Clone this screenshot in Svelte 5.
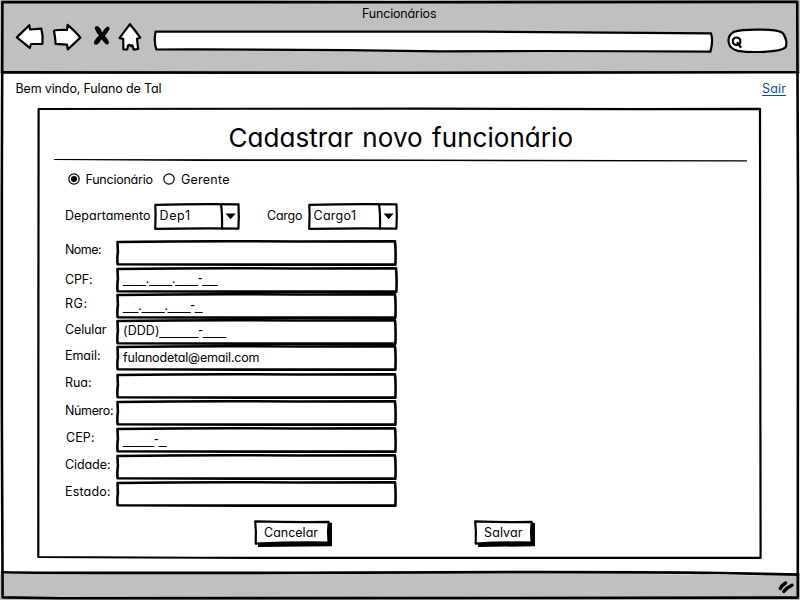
<script>
  const fields = [
    { label: 'Nome:', lw: 36.5, gap: 0, lt: 1 },
    { label: 'CPF:', lw: 27.5, gap: 1, lt: 4, mask: '___.___.___-__', mw: 94.5, vt: 3, wide: true },
    { label: 'RG:', lw: 22, gap: 0, lt: 2, mask: '__.___.___-_', mw: 79.5, vt: 4 },
    { label: 'Celular', lw: 41.5, gap: 0, lt: 2, value: '(DDD)', vw: 36.5, mask: '_____-___', mw: 66.5, vt: 3 },
    { label: 'Email:', lw: 35.5, gap: 0, lt: 2, value: 'fulanodetal@email.com', vw: 136.5, vt: 4 },
    { label: 'Rua:', lw: 26.5, gap: 2, lt: 1 },
    { label: 'Número:', lw: 48.5, gap: 1, lt: 2 },
    { label: 'CEP:', lw: 28.5, gap: 1, lt: 2, mask: '____-_', mw: 43.5, vt: 4, indent: 1 },
    { label: 'Cidade:', lw: 45.5, gap: 1, lt: 2 },
    { label: 'Estado:', lw: 45.5, gap: 1, lt: 2 }
  ];

  // Spreads the letters of a run so that it fills the given width.
  function fit(node, width) {
    const natural = node.getBoundingClientRect().width;
    const spacing = (width - natural) / (node.textContent.length - 1);
    node.style.letterSpacing = `${spacing}px`;
    node.style.marginRight = `${-spacing}px`;
  }
</script>

{#snippet text(value, width)}
  <span class="run" use:fit={width}>{value}</span>
{/snippet}

{#snippet select(value, width, textWidth)}
  <div class="select" style:width="{width}px">
    <svg class="sketch" {width} height="27" viewBox="0 0 {width} 27">
      <path class="paper" d="M1.3 1.8 Q{width / 2} .9 {width - 1.5} 1.4 L{width - 1.2} 14 L{width - 1.6} 25.6 Q{width / 2} 25.2 1.2 25.9 L1.6 12Z" />
      <path class="line" d="M{width - 19} 1.5 Q{width - 17.6} 10 {width - 18} 25.5" />
      <path d="M{width - 14.4} 10.6 H{width - 4.4} L{width - 9.4} 16.2Z" />
    </svg>
    {@render text(value, textWidth)}
  </div>
{/snippet}

{#snippet button(value, width, textWidth)}
  <button style:width="{width}px">
    <svg class="sketch" {width} height="27" viewBox="0 0 {width} 27">
      <path d="M4 24 L4 27 L{width} 26.3 V3 L{width - 3} 2.4Z" />
      <path class="paper" d="M1.2 1.3 Q{width / 2} 2.4 {width - 3.3} 1.9 L{width - 4} 12 L{width - 3.4} 22.6 Q{width / 2} 22 1.7 23.6 L1.9 12Z" />
    </svg>
    {@render text(value, textWidth)}
  </button>
{/snippet}

<div class="window">
  <header>
    <div class="title">{@render text('Funcionários', 74.5)}</div>
    <div class="toolbar">
      <svg class="back" width="31" height="32" viewBox="14 22 31 32">
        <path class="paper" d="M16.8 37.4 L29.3 25.2 L30 29.5 L41.3 28.6 L42.6 36 L42.4 43.8 L31 44 L29.8 48 Q22 41.5 16.8 37.4Z" />
      </svg>
      <svg class="forward" width="32" height="32" viewBox="51 22 32 32">
        <path class="paper" d="M54 31 Q54.3 29.6 67 30 L67.6 24.8 Q76 32 80.4 37.6 L67.8 49.4 L67 44.6 L55.6 43.9 L55 37Z" />
      </svg>
      <svg class="stop" width="20" height="32" viewBox="92 22 20 32">
        <path d="M94.6 28 Q95.5 25.4 98.4 26.4 Q101 28.5 102.3 32.4 Q104.5 28.4 107.3 26.6 Q110 26.6 109.4 29.6 Q107.4 33 104.9 35.7 Q107.8 38.8 109 42 Q109 45 106.2 44.4 Q103.6 42.4 101.6 39.2 Q99.6 43 96.8 44.8 Q93.4 45.2 94 41.6 Q95.8 38.4 98.9 35.6 Q95.8 32 94.6 28Z" />
      </svg>
      <svg class="home" width="26" height="32" viewBox="117 22 26 32">
        <path class="paper" d="M130 24.2 L134.6 30 L140.3 37.6 L137 38.8 L138.2 49 L133.7 49.6 L132.4 45.3 L131 46.2 L129.6 44.9 L128 45.5 L127.3 49.4 L123.4 49.5 L123.2 38.8 L119.6 38.2 Q123.4 32.8 130 24.2Z" />
      </svg>
      <svg class="address" width="563" height="32" viewBox="152 22 563 32">
        <path class="paper" d="M155.6 31.5 L480 31.7 Q600 32.6 711 33.3 Q713.4 40 710.5 51.6 Q560 50.6 440 51.3 Q300 49.2 156.4 49.5 Q153.6 42 155.6 31.5Z" />
      </svg>
      <svg class="search" width="65" height="32" viewBox="725 22 65 32">
        <path class="paper" d="M734 31.8 C744 28.4 776 29.2 781.5 32.2 C785.5 34.8 787.5 43 785.6 47.3 C780.5 52.6 750 52.8 738 50.8 C726.5 48.5 725.8 36.5 734 31.8Z" />
        <circle class="line" cx="736.6" cy="41.3" r="3.8" />
        <path class="line" d="M737.6 43 L740.6 47" />
      </svg>
    </div>
  </header>

  <main>
    <div class="session">
      {@render text('Bem vindo, Fulano de Tal', 146)}
      <a href="#sair">{@render text('Sair', 24)}</a>
    </div>

    <section class="panel">
      <svg class="sketch" width="725" height="452" viewBox="37 107 725 452">
        <path class="line" d="M38.6 109 Q200 108 420 108.6 Q560 109.4 640 109.2 L760 108.8 L760.2 300 L760.6 557.8 Q600 558.4 400 557.8 Q200 558.2 38.3 557 L38.4 300Z" />
      </svg>
      <h1>{@render text('Cadastrar novo funcionário', 344.5)}</h1>
      <svg class="rule" width="693" height="6" viewBox="54 157 693 6">
        <path d="M54 159 L300 159.3 L747 160.2 L747 161.5 L420 161.1 L200 161.1 L54 160Z" />
      </svg>

      <div class="roles">
        <label>
          <svg width="12" height="12" viewBox="0 0 12 12">
            <circle class="ring" cx="6" cy="6" r="5.2" />
            <circle cx="6" cy="6" r="3" />
          </svg>
          {@render text('Funcionário', 67.5)}
        </label>
        <label>
          <svg width="12" height="12" viewBox="0 0 12 12">
            <circle class="ring" cx="6" cy="6" r="5.2" />
          </svg>
          {@render text('Gerente', 48.5)}
        </label>
      </div>

      <div class="selects">
        <div class="name dep">{@render text('Departamento', 85.5)}</div>
        {@render select('Dep1', 86, 30.5)}
        <div class="name cargo">{@render text('Cargo', 35.5)}</div>
        {@render select('Cargo1', 90, 42.5)}
      </div>

      <div class="fields">
        {#each fields as f}
          {@const w = f.wide ? 282 : 281}
          <div class="field" style:margin-top="{f.gap}px">
            <div class="label" style:padding-top="{f.lt}px" style:padding-left="{f.indent ?? 0}px">
              {@render text(f.label, f.lw)}
            </div>
            <div class="input" style:width="{w}px" style:padding-top="{f.vt ?? 0}px">
              <svg class="sketch" width={w} height="26" viewBox="0 0 {w} 26">
                <path class="paper thick" d="M1.5 2 Q90 .9 180 1.5 L{w - 2} 1.4 Q{w - 1} 10 {w - 1.6} 24.6 Q190 24.7 130 24.6 Q60 24.2 1.6 24.2 Q1 18 1.9 12Z" />
              </svg>
              {#if f.value}{@render text(f.value, f.vw)}{/if}
              {#if f.mask}<span class="mask">{@render text(f.mask, f.mw)}</span>{/if}
            </div>
          </div>
        {/each}
      </div>

      <div class="actions">
        {@render button('Cancelar', 78, 54)}
        {@render button('Salvar', 61, 38.5)}
      </div>
    </section>
  </main>

  <footer>
    <svg width="20" height="16" viewBox="776 579 20 16">
      <path class="grip" d="M785.6 583 Q781.5 585.6 780.2 588.6 M792 585.2 Q787 587.4 783.8 591.4" />
    </svg>
  </footer>

  <svg class="sketch" width="800" height="600" viewBox="0 0 800 600">
    <path d="M0 571 L300 572 L640 570.8 L798 573.5 L798 576 L640 574 L300 574 L0 574Z" fill="#fff" />
    <path class="line thick" d="M2.4 2 L400 2.2 L797.2 1.8 L798 200 L797.8 597.6 L500 598 Q200 598.2 60 598.2 L2.6 597.4 L1.8 400 L1.8 200Z" />
    <path class="line thick" d="M2 72.4 L400 72.8 L798 72.2" />
    <path class="line thick" d="M2 572.2 Q60 573.2 300 572.8 Q600 571.4 720 573 L798 574.6" />
  </svg>
</div>

<style>
  :global(body) {
    margin: 0;
    background: #fff;
  }
  .window {
    position: relative;
    display: flex;
    flex-direction: column;
    width: 800px;
    height: 600px;
    overflow: hidden;
    background: #fff;
    color: #000;
    font: 12.5px/18px Inter, 'Open Sans', sans-serif;
    font-feature-settings: 'cv11', 'calt' 0;
  }
  svg {
    display: block;
    flex: none;
  }
  .run {
    display: inline-block;
    white-space: pre;
    z-index: 1;
  }
  .sketch {
    position: absolute;
    left: 0;
    top: 0;
    pointer-events: none;
  }
  .line,
  .paper {
    fill: none;
    stroke: #000;
    stroke-width: 2.2;
    stroke-linejoin: round;
    stroke-linecap: round;
  }
  .paper {
    fill: #fff;
  }
  .thick {
    stroke-width: 2.6;
  }
  header {
    height: 73px;
    background: #c0c0c0;
  }
  .title {
    padding: 5px 0 1px 362px;
    height: 16px;
  }
  .toolbar {
    display: flex;
    padding-left: 14px;
  }
  .forward {
    margin-left: 6px;
  }
  .stop {
    margin-left: 9px;
  }
  .home {
    margin-left: 5px;
  }
  .address {
    margin-left: 9px;
  }
  .search {
    margin-left: 10px;
  }
  main {
    flex: 1;
  }
  .session {
    display: flex;
    justify-content: space-between;
    padding: 7px 14px 11px 15.5px;
    height: 16px;
  }
  .session a {
    height: 15px;
    border-bottom: 1px solid #0b4f9c;
    color: #0b4f9c;
    text-decoration: none;
  }
  .panel {
    position: relative;
    display: flex;
    flex-direction: column;
    box-sizing: border-box;
    width: 725px;
    height: 452px;
    margin-left: 37px;
    padding-top: 15px;
  }
  h1 {
    margin: 0 0 3px 191.5px;
    height: 32px;
    font-size: 26px;
    font-weight: 400;
    line-height: 32px;
    word-spacing: 2px;
  }
  .rule {
    margin-left: 17px;
  }
  .roles {
    display: flex;
    gap: 10.5px;
    margin: 8px 0 16px 31px;
  }
  .roles label {
    display: flex;
    gap: 5.5px;
    height: 16px;
  }
  .roles svg {
    margin-top: 2px;
  }
  .ring {
    fill: #fff;
    stroke: #000;
    stroke-width: 1.2;
  }
  .selects {
    display: flex;
    height: 27px;
    margin-left: 28px;
  }
  .name {
    padding-top: 4px;
  }
  .dep {
    width: 89px;
  }
  .cargo {
    width: 41px;
    margin-left: 27px;
  }
  .select {
    position: relative;
    z-index: 0;
    display: flex;
    box-sizing: border-box;
    padding: 4px 0 0 5.5px;
  }
  .fields {
    margin: 10px 0 0 28px;
  }
  .field {
    display: flex;
    height: 26px;
  }
  .label {
    box-sizing: border-box;
    width: 51px;
    white-space: nowrap;
  }
  .input {
    position: relative;
    z-index: 0;
    display: flex;
    box-sizing: border-box;
    height: 26px;
    padding-left: 7px;
  }
  .mask {
    z-index: 1;
    margin-top: -1.5px;
    font-family: 'Liberation Sans', Arial, sans-serif;
    font-size: 14px;
  }
  .actions {
    display: flex;
    gap: 142px;
    margin: 13px 0 0 217px;
  }
  button {
    position: relative;
    z-index: 0;
    display: flex;
    height: 27px;
    margin: 0;
    padding: 4px 0 0 10px;
    border: 0;
    background: none;
    color: inherit;
    font: inherit;
    font-feature-settings: inherit;
    text-align: left;
  }
  footer {
    display: flex;
    justify-content: flex-end;
    box-sizing: border-box;
    height: 27px;
    padding: 6px 4px 0 0;
    background: #c0c0c0;
  }
  .grip {
    fill: none;
    stroke: #000;
    stroke-width: 3.4;
    stroke-linecap: round;
  }
</style>
